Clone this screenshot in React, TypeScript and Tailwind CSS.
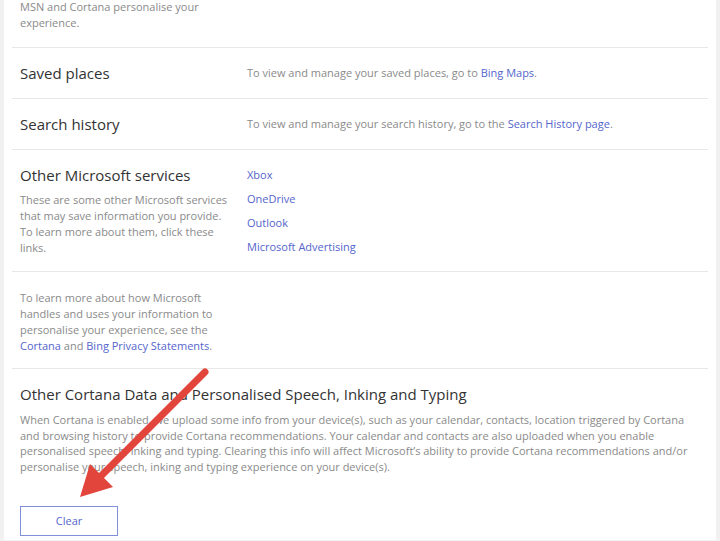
const links = ['Xbox', 'OneDrive', 'Outlook', 'Microsoft Advertising'];

function Link({ children }: { children: React.ReactNode }) {
  return <a className="text-[#5565cc]">{children}</a>;
}

function SimpleRow({ title, children }: { title: string; children: React.ReactNode }) {
  return (
    <div className="flex h-[51px] items-center border-b border-[#e8e8e8] px-2">
      <div className="w-[227px] text-[15px] text-[#333]">{title}</div>
      <p className="text-[11px] text-[#8a8a8a]">{children}</p>
    </div>
  );
}

export default function App() {
  return (
    <div
      className="relative h-[541px] w-[720px] overflow-hidden bg-[#f1f1f1] pl-[4px] pr-[4px]"
      style={{ fontFamily: '"Open Sans", "Noto Sans", sans-serif' }}
    >
      <div className="h-full bg-white px-2">
        <div className="border-b border-[#e8e8e8] px-2 pb-[16px]">
          <p className="-mt-px w-[200px] text-[11px] leading-4 text-[#8a8a8a]">
            MSN and Cortana personalise your experience.
          </p>
        </div>

        <SimpleRow title="Saved places">
          To view and manage your saved places, go to <Link>Bing Maps</Link>.
        </SimpleRow>
        <SimpleRow title="Search history">
          To view and manage your search history, go to the <Link>Search History page</Link>.
        </SimpleRow>

        <div className="flex h-[122px] border-b border-[#e8e8e8] px-2 pt-[15px]">
          <div className="w-[227px]">
            <h2 className="text-[15px] leading-5 text-[#333]">Other Microsoft services</h2>
            <p className="mt-[7px] w-[212px] text-[11px] leading-4 text-[#8a8a8a]">
              These are some other Microsoft services that may save information you provide. To learn more about them, click these links.
            </p>
          </div>
          <div className="flex flex-col pt-[2px] text-[11px] leading-4">
            {links.map((l) => (
              <a key={l} className="mb-2 text-[#5565cc]">{l}</a>
            ))}
          </div>
        </div>

        <div className="h-[97px] border-b border-[#e8e8e8] px-2 pt-[18px]">
          <p className="w-[200px] text-[11px] leading-4 text-[#8a8a8a]">
            To learn more about how Microsoft handles and uses your information to personalise your experience, see the{' '}
            <Link>Cortana</Link> and <Link>Bing Privacy Statements</Link>.
          </p>
        </div>

        <div className="px-2 pt-[15px]">
          <h2 className="text-[15px] leading-5 text-[#333]">
            Other Cortana Data and Personalised Speech, Inking and Typing
          </h2>
          <p className="mt-[8px] w-[680px] text-[11px] leading-[15.7px] text-[#8a8a8a]">
            When Cortana is enabled, we upload some info from your device(s), such as your calendar, contacts, location triggered by Cortana and browsing history to provide Cortana recommendations. Your calendar and contacts are also uploaded when you enable personalised speech, inking and typing. Clearing this info will affect Microsoft’s ability to provide Cortana recommendations and/or personalise your speech, inking and typing experience on your device(s).
          </p>
          <button className="mt-[31px] h-[30px] w-[98px] border border-[#7f8fdc] text-[11px] text-[#5565cc]">
            Clear
          </button>
        </div>
      </div>

      <svg className="pointer-events-none absolute left-0 top-0" width="720" height="541">
        <line x1="205" y1="372" x2="100" y2="477" stroke="#e2453b" strokeWidth="7" strokeLinecap="round" />
        <polygon points="80,497 90,464 113,487" fill="#e2453b" />
      </svg>
    </div>
  );
}
